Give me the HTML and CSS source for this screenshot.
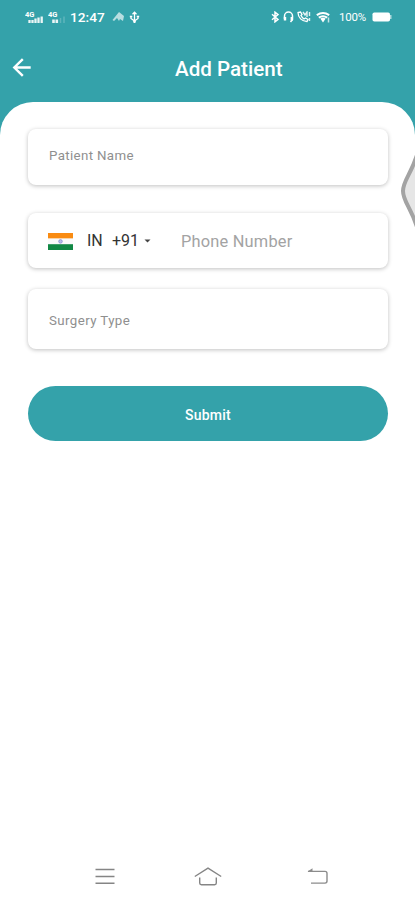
FILE: index.html
```html
<!DOCTYPE html>
<html lang="en">
<head>
<meta charset="utf-8">
<title>Add Patient</title>
<link rel="stylesheet" href="styles.css">
</head>
<body>
<div class="screen">
  <div class="status">
    <div class="status-left">
      <svg class="signal" width="19" height="14" viewBox="0 0 19 14"><text x="0" y="6.500">4G</text><path d="M4.500 10v3M7.500 10v3M10.500 8.500v4.500M13.500 7.500v5.500M16.700 6.500v6.500" stroke="#fff" stroke-width="2.300" opacity=".9"/></svg>
      <svg class="signal second" width="18" height="14" viewBox="0 0 18 14"><text x="0" y="6.500">4G</text><path d="M5.500 9.500v3.500M8.800 9.500v3.500" stroke="#fff" stroke-width="2.600" opacity=".9"/><path d="M12.500 8v5M16 6.500v6.500" stroke="#fff" stroke-width="1.500" opacity=".2"/></svg>
      <span class="time">12:47</span>
      <svg class="cast" width="13" height="12" viewBox="0 0 13 12"><path d="M.5 9 7 1l5 4-1 5-3-2-1 2-2-3-3 3z" fill="#fff" opacity=".65"/></svg>
      <svg class="usb" width="11" height="13" viewBox="0 0 11 13" fill="none" stroke="#fff" stroke-width="1.300"><path d="M5.500 1v11M2 5.500V7.500l3.500 2.500 3.500-2.500V5.500M3.500 3.200l2-2 2 2M.8 5.500h2.500M7.700 5.500h2.500"/><path d="M4.200 10.500h2.600" stroke-width="2"/></svg>
    </div>
    <div class="status-right">
      <svg class="bt" width="9" height="12" viewBox="0 0 9 12" fill="none" stroke="#fff" stroke-width="1.500"><path d="m1 3.200 6 5.200-3 2.400V1.200l3 2.400-6 5.200"/></svg>
      <svg class="phones" width="11" height="12" viewBox="0 0 11 12" fill="none" stroke="#fff"><path d="M1.500 8V5a4 4 0 0 1 8 0v3.500L7.500 11" stroke-width="1.500"/><path d="M2 6v3.500M8.800 6v3.500" stroke-width="2.400"/></svg>
      <svg class="call" width="15" height="12" viewBox="0 0 15 12" fill="none" stroke="#fff"><path d="M1 1.500c0 5 4 9 9 9l1-2-2.500-1.500-1.500 1C5.500 7 4.500 5.500 4 4.500l1-1L3.500 1z" stroke-width="1.300"/><path d="m6 1 2 3 2-3v5M12.500 1v4M12.500 7v3" stroke-width="1.400" opacity=".85"/></svg>
      <svg class="wifi" width="15" height="12" viewBox="0 0 15 12" fill="none" stroke="#fff"><path d="M.8 4.200Q7 0 13.200 4.200M2.800 6.700q4.200-2.800 8.400 0" stroke-width="2"/><path d="m4.300 7.500 2.700 4 2.700-4q-2.700-1.500-5.400 0" fill="#fff" stroke="none"/><path d="M12.500 6.500v5" stroke-width="1.500" opacity=".7"/></svg>
      <span class="percent">100%</span>
      <svg class="battery" width="20" height="10" viewBox="0 0 20 10"><rect x=".5" y=".5" width="17.500" height="9" rx="1.800" fill="#fff"/><path d="M18 3h1.500v4H18z" fill="#fff" opacity=".6"/></svg>
    </div>
  </div>
  <header class="header">
    <svg class="back" width="20" height="20" viewBox="0 0 20 20" fill="none" stroke="#fff" stroke-width="2.400"><path d="M18.700 9.500H2.500M10.800 1.200 2.300 9.500l8.500 8.300"/></svg>
    <h1>Add Patient</h1>
  </header>
  <main class="sheet">
    <div class="card name"><span class="label">Patient Name</span></div>
    <div class="card phone">
      <svg class="flag" width="25" height="17" viewBox="0 0 25 17"><path fill="#f98b12" d="M0 0h25v5.600H0z"/><path fill="#fafafa" d="M0 5.600h25v5.600H0z"/><path fill="#128845" d="M0 11.200h25V17H0z"/><circle cx="12.500" cy="8.400" r="1.800" fill="#b9bce9" stroke="#8288ce" stroke-width=".7"/></svg>
      <span class="country">IN</span><span class="code">+91</span>
      <svg class="caret" width="7" height="4" viewBox="0 0 7 4"><path d="M.5.5h6l-3 3z" fill="#444"/></svg>
      <span class="number">Phone Number</span>
    </div>
    <div class="card surgery"><span class="label surgery-label">Surgery Type</span></div>
    <button class="submit">Submit</button>
  </main>
  <nav class="nav">
    <svg class="menu" width="20" height="17" viewBox="0 0 20 17" stroke="#858585" stroke-width="1.400"><path d="M.5 1.500h19M.5 8.500h19M.5 15.300h19"/></svg>
    <svg class="home" width="28" height="19" viewBox="0 0 28 19" fill="none" stroke="#858585" stroke-width="1.400"><path d="M.8 9.500 14 1.200l13.200 8.300M5.700 10.500v5.500q0 1.700 1.700 1.700h13.200q1.700 0 1.700-1.700v-5.500"/></svg>
    <svg class="return" width="21" height="17" viewBox="0 0 21 17" fill="none" stroke="#8c8c8c" stroke-width="1.400"><path d="M1 3.400h17q2 0 2 2v7.700q0 2-2 2H4"/><path d="M.5 3.600 5.500.3v3.300z" fill="#8c8c8c" stroke="none"/></svg>
  </nav>
  <svg class="edge-handle" width="15" height="78" viewBox="0 0 15 78"><path d="M20-8C14 20 3 27 3 39s11 19 17 47z" fill="#e6e6e6" stroke="#a3a3a3" stroke-width="4"/></svg>
</div>
</body>
</html>
```
FILE: styles.css
```css
* { box-sizing: border-box; }
body { margin: 0; font-family: Roboto, "Liberation Sans", sans-serif; }
svg { display: block; flex: none; }
.screen {
  position: relative;
  display: flex;
  flex-direction: column;
  width: 415px;
  height: 900px;
  overflow: hidden;
  background: #34a2aa;
}
.status {
  display: flex;
  justify-content: space-between;
  height: 34px;
  padding: 0 23px 0 25px;
  color: #fff;
}
.status-left, .status-right { display: flex; align-items: center; height: 34px; }
.signal text { font-size: 7.500px; font-weight: 700; fill: #fff; }
.second { margin-left: 4px; }
.time { width: 35px; margin-left: 4px; font-size: 13.700px; font-weight: 500; line-height: 34px; white-space: nowrap; }
.cast { margin-left: 7px; }
.usb { margin-left: 4px; }
.phones { margin-left: 3px; }
.call { margin-left: 3px; }
.wifi { margin-left: 4px; }
.percent { width: 28px; margin-left: 8px; font-size: 11.500px; line-height: 34px; letter-spacing: -.2px; white-space: nowrap; }
.battery { margin-left: 5px; }
.header { display: flex; align-items: center; height: 68px; padding: 0 12px 0 12px; }
h1 { margin: 2px 0 0 143px; color: #fff; font-size: 20.600px; font-weight: 500; line-height: 24px; white-space: nowrap; }
.sheet {
  display: flex;
  flex: 1;
  flex-direction: column;
  padding: 27px 27px 0 28px;
  background: #fff;
  border-radius: 33px 33px 0 0;
}
.card {
  display: flex;
  align-items: center;
  background: #fff;
  border-radius: 8px;
  box-shadow: 0 1px 4px rgba(0, 0, 0, .25);
}
.name { height: 56px; padding: 0 21px 3px; }
.phone { height: 55px; margin-top: 28px; padding: 1px 20px 0; }
.surgery { height: 60px; margin-top: 21px; padding: 2px 21px 0; }
.label { color: #8f8f8f; font-size: 13.300px; letter-spacing: .35px; }
.surgery-label { letter-spacing: .4px; }
.country { width: 17px; margin-left: 14px; }
.code { width: 28px; margin-left: 8px; }
.country, .code { color: #333; font-size: 16px; line-height: 20px; }
.caret { margin-left: 4px; }
.number { margin-left: 30px; color: #a3a3a3; font-size: 16.400px; letter-spacing: .2px; }
.submit {
  height: 55px;
  margin-top: 37px;
  padding: 2px 0 0;
  border: 0;
  border-radius: 28px;
  background: #34a2aa;
  color: #fff;
  font: 500 14px Roboto, sans-serif;
  letter-spacing: .2px;
}
.nav { display: flex; align-items: center; height: 48px; padding: 0 87px 0 95px; background: #fff; }
.home { margin-left: 79px; }
.return { margin-left: 85px; }
.edge-handle { position: absolute; top: 152px; right: 0; }
```
